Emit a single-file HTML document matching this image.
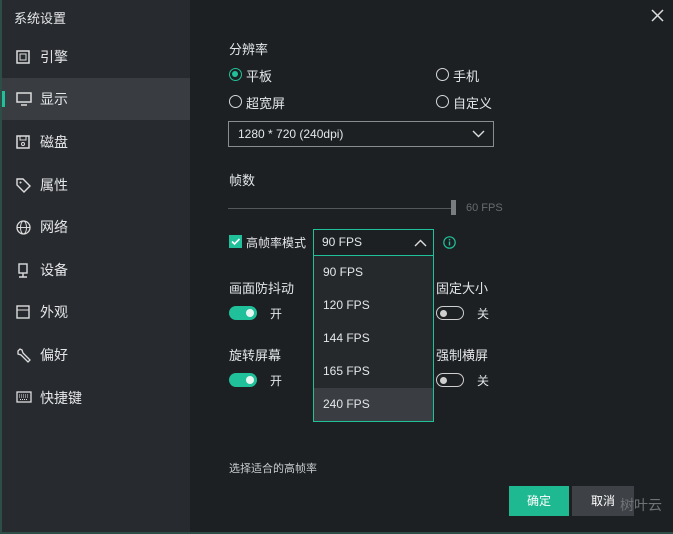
<!DOCTYPE html>
<html><head><meta charset="utf-8"><style>
*{margin:0;padding:0;box-sizing:border-box}
body{width:673px;height:534px;overflow:hidden;background:#1d2023;font-family:"Liberation Sans","Noto Sans CJK SC",sans-serif;color:#e4e6e8;font-size:13px;position:relative}
.side{position:absolute;left:0;top:0;width:190px;height:534px;background:#272a2e;border-left:2px solid #2e4d47}
.t{position:absolute}
.item{position:absolute;left:0;width:188px;height:42px;line-height:42px;padding-left:38px;font-size:14px}
.item svg{position:absolute;left:14px;top:14px}
.act{background:#393c40}
.act:before{content:"";position:absolute;left:0;top:13px;width:3px;height:16px;background:#20c19a}
.radio{position:absolute;width:13px;height:13px;border:1.5px solid #d8d8d8;border-radius:50%}
.radio.on{border-color:#20c19a}
.radio.on:after{content:"";position:absolute;left:2px;top:2px;width:6px;height:6px;border-radius:50%;background:#20c19a}
.tg{position:absolute;width:28px;height:14px;border-radius:7px}
.tg.on{background:#20c19a}
.tg.on:after{content:"";position:absolute;right:3px;top:3px;width:8px;height:8px;border-radius:50%;background:#e8f5f1}
.tg.off{border:1.5px solid #cfcfcf}
.tg.off:after{content:"";position:absolute;left:3px;top:2.5px;width:7px;height:7px;border-radius:50%;background:#cfcfcf}
.opt{position:absolute;left:0;width:119px;height:33px;line-height:33px;padding-left:9px;font-size:12px}
</style></head><body>
<div class="side">
<div class="t" style="left:12px;top:8px;font-size:13px">系统设置</div>
<div class="item" style="top:36px"><svg width="14" height="14"><rect x="1" y="1" width="12" height="12" fill="none" stroke="#ddd" stroke-width="1.5"/><rect x="4" y="4" width="6" height="6" fill="none" stroke="#ddd"/></svg>引擎</div>
<div class="item act" style="top:78px"><svg width="16" height="14"><rect x="1" y="1" width="14" height="9" fill="none" stroke="#ddd" stroke-width="1.5"/><path d="M5 13h6" stroke="#ddd" stroke-width="1.5"/></svg>显示</div>
<div class="item" style="top:121px"><svg width="14" height="14"><rect x="1" y="1" width="12" height="12" fill="none" stroke="#ddd" stroke-width="1.5"/><path d="M4 1v4h6V1" fill="none" stroke="#ddd"/><circle cx="7" cy="9" r="1.5" fill="none" stroke="#ddd"/></svg>磁盘</div>
<div class="item" style="top:164px"><svg width="15" height="15"><path d="M1 1h6l7 7-6 6-7-7z" fill="none" stroke="#ddd" stroke-width="1.4"/><circle cx="4.5" cy="4.5" r="1" fill="#ddd"/></svg>属性</div>
<div class="item" style="top:206px"><svg width="15" height="15"><circle cx="7.5" cy="7.5" r="6.5" fill="none" stroke="#ddd" stroke-width="1.3"/><ellipse cx="7.5" cy="7.5" rx="3" ry="6.5" fill="none" stroke="#ddd"/><path d="M1 7.5h13" stroke="#ddd"/></svg>网络</div>
<div class="item" style="top:249px"><svg width="14" height="15"><rect x="3" y="1" width="8" height="9" fill="none" stroke="#ddd" stroke-width="1.4"/><path d="M7 10v4M3 14h8" stroke="#ddd" stroke-width="1.4"/></svg>设备</div>
<div class="item" style="top:291px"><svg width="14" height="14"><rect x="1" y="1" width="12" height="12" fill="none" stroke="#ddd" stroke-width="1.4"/><path d="M1 5h12" stroke="#ddd"/></svg>外观</div>
<div class="item" style="top:334px"><svg width="15" height="15"><path d="M2 3l2-2 2 1 1 3 7 7-2 2-7-7-3-1z" fill="none" stroke="#ddd" stroke-width="1.3"/></svg>偏好</div>
<div class="item" style="top:377px"><svg width="16" height="12"><rect x="1" y="1" width="14" height="10" fill="none" stroke="#ddd" stroke-width="1.3"/><path d="M3 4h10M3 6h10M4 8.5h8" stroke="#ddd" stroke-dasharray="1 1"/></svg>快捷键</div>
</div>
<svg class="t" style="left:651px;top:9px" width="13" height="13"><path d="M1 1l11 11M12 1L1 12" stroke="#ddd" stroke-width="1.5"/></svg>
<div class="t" style="left:229px;top:39px">分辨率</div>
<div class="radio on" style="left:229px;top:68px"></div><div class="t" style="left:246px;top:66px">平板</div>
<div class="radio" style="left:436px;top:68px"></div><div class="t" style="left:453px;top:66px">手机</div>
<div class="radio" style="left:229px;top:95px"></div><div class="t" style="left:246px;top:93px">超宽屏</div>
<div class="radio" style="left:436px;top:95px"></div><div class="t" style="left:453px;top:93px">自定义</div>
<div class="t" style="left:228px;top:121px;width:266px;height:26px;border:1px solid #8a8d90;font-size:12px;line-height:24px;padding-left:9px">1280 * 720 (240dpi)<svg style="position:absolute;right:8px;top:8px" width="13" height="8"><path d="M1 1l5.5 5.5L12 1" fill="none" stroke="#ddd" stroke-width="1.4"/></svg></div>
<div class="t" style="left:229px;top:170px">帧数</div>
<div class="t" style="left:228px;top:208px;width:225px;height:1px;background:#55585b"></div>
<div class="t" style="left:451px;top:200px;width:5px;height:15px;background:#7a7d80"></div>
<div class="t" style="left:466px;top:202px;font-size:11px;color:#686b6e">60 FPS</div>
<div class="t" style="left:229px;top:235px;width:13px;height:13px;background:#20c19a"><svg width="13" height="13" style="position:absolute"><path d="M3 6.5l2.5 2.5 5-5" fill="none" stroke="#fff" stroke-width="1.6"/></svg></div>
<div class="t" style="left:246px;top:234px;font-size:12px">高帧率模式</div>
<div class="t" style="left:313px;top:229px;width:121px;height:27px;border:1px solid #20c19a;font-size:12px;line-height:25px;padding-left:8px">90 FPS<svg style="position:absolute;right:6px;top:9px" width="13" height="8"><path d="M1 7l5.5-5.5L12 7" fill="none" stroke="#ddd" stroke-width="1.4"/></svg></div>
<svg class="t" style="left:443px;top:236px" width="13" height="13"><circle cx="6.5" cy="6.5" r="5.7" fill="none" stroke="#20c19a" stroke-width="1.2"/><path d="M6.5 5.5v4" stroke="#20c19a" stroke-width="1.4"/><circle cx="6.5" cy="3.7" r=".8" fill="#20c19a"/></svg>
<div class="t" style="left:229px;top:278px">画面防抖动</div>
<div class="tg on" style="left:229px;top:306px"></div><div class="t" style="left:270px;top:305px;font-size:12px">开</div>
<div class="t" style="left:229px;top:345px">旋转屏幕</div>
<div class="tg on" style="left:229px;top:373px"></div><div class="t" style="left:270px;top:372px;font-size:12px">开</div>
<div class="t" style="left:436px;top:278px">固定大小</div>
<div class="tg off" style="left:436px;top:306px"></div><div class="t" style="left:477px;top:305px;font-size:12px">关</div>
<div class="t" style="left:436px;top:345px">强制横屏</div>
<div class="tg off" style="left:436px;top:373px"></div><div class="t" style="left:477px;top:372px;font-size:12px">关</div>
<div class="t" style="left:313px;top:255px;width:121px;height:167px;background:#26292c;border:1px solid #20c19a">
<div class="opt" style="top:0">90 FPS</div>
<div class="opt" style="top:33px">120 FPS</div>
<div class="opt" style="top:66px">144 FPS</div>
<div class="opt" style="top:99px">165 FPS</div>
<div class="opt" style="top:132px;background:#3a3d41">240 FPS</div>
</div>
<div class="t" style="left:229px;top:460px;font-size:11px;color:#c8cacc">选择适合的高帧率</div>
<div class="t" style="left:509px;top:486px;width:60px;height:30px;background:#1fb991;font-size:12px;line-height:30px;text-align:center;color:#fff">确定</div>
<div class="t" style="left:572px;top:486px;width:62px;height:30px;background:#3e4246;font-size:12px;line-height:30px;text-align:center;color:#fff">取消</div>
<div class="t" style="left:620px;top:495px;font-size:14px;color:#6f7377">树叶云</div>
<div class="t" style="left:0;top:532px;width:673px;height:2px;background:#2e4d47"></div>
</body></html>
